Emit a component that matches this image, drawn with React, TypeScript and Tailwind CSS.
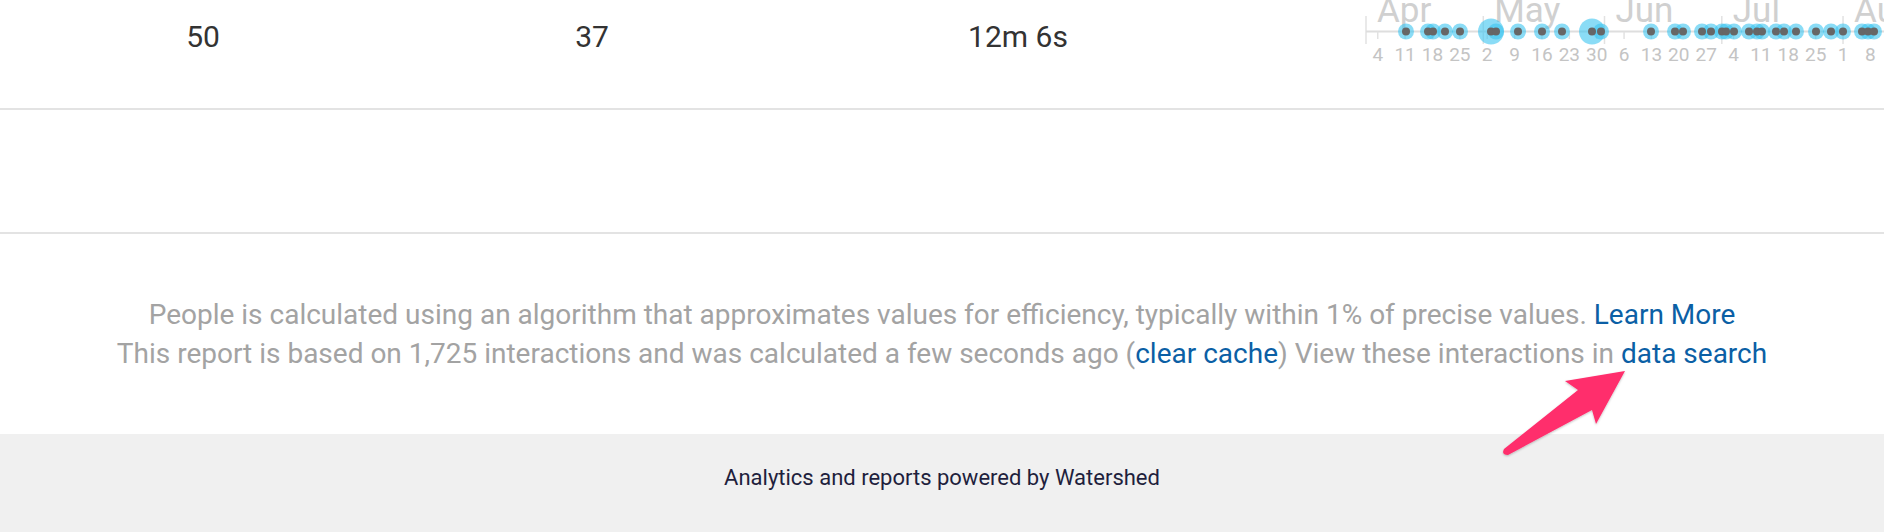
const OX = 1258;
const DAY = 3.91;
const START = 1366;

const dx = (d: number) => START - OX + d * DAY;

const weeks = ["4", "11", "18", "25", "2", "9", "16", "23", "30", "6", "13", "20", "27", "4", "11", "18", "25", "1", "8"];
const months = [
  { label: "Apr", d: 0 },
  { label: "May", d: 30 },
  { label: "Jun", d: 61 },
  { label: "Jul", d: 91 },
  { label: "Aug", d: 122 },
];

// x positions in page coords, r = halo radius
const dots: { x: number; r: number }[] = [
  { x: 1406, r: 8 },
  { x: 1428, r: 8 },
  { x: 1433, r: 8 },
  { x: 1445, r: 8 },
  { x: 1460, r: 8 },
  { x: 1491, r: 13 },
  { x: 1496, r: 8 },
  { x: 1518, r: 8 },
  { x: 1542, r: 8 },
  { x: 1562, r: 8 },
  { x: 1592, r: 13 },
  { x: 1601, r: 8 },
  { x: 1651, r: 8 },
  { x: 1675, r: 8 },
  { x: 1683, r: 8 },
  { x: 1702, r: 8 },
  { x: 1711, r: 8 },
  { x: 1722, r: 8 },
  { x: 1726, r: 8 },
  { x: 1734, r: 8 },
  { x: 1749, r: 8 },
  { x: 1757, r: 8 },
  { x: 1762, r: 8 },
  { x: 1776, r: 8 },
  { x: 1784, r: 8 },
  { x: 1796, r: 8 },
  { x: 1816, r: 8 },
  { x: 1831, r: 8 },
  { x: 1843, r: 8 },
  { x: 1862, r: 8 },
  { x: 1868, r: 8 },
  { x: 1874, r: 8 },
];

function Timeline() {
  const axisY = 31.5;
  return (
    <svg width={626} height={70} className="block" style={{ fontFamily: "Roboto, sans-serif" }}>
      {months.map((m) => (
        <g key={m.label}>
          <line x1={dx(m.d)} x2={dx(m.d)} y1={16} y2={44} stroke="#e2e2e2" strokeWidth={1.5} />
          <text x={dx(m.d) + 11} y={22} fontSize={35} fill="#d0d0d0">
            {m.label}
          </text>
        </g>
      ))}
      <line x1={dx(0)} x2={626} y1={axisY} y2={axisY} stroke="#dedede" strokeWidth={2} />
      {weeks.map((w, i) => {
        const x = dx(3 + i * 7);
        return (
          <g key={i}>
            <line x1={x} x2={x} y1={axisY} y2={39} stroke="#e2e2e2" strokeWidth={1.5} />
            <text x={x} y={61} fontSize={19} fill="#c4c4c4" textAnchor="middle">
              {w}
            </text>
          </g>
        );
      })}
      {dots.map((p, i) => (
        <circle key={"h" + i} cx={p.x - OX} cy={axisY} r={p.r} fill="#3cc4f0" fillOpacity={0.6} />
      ))}
      {dots.map((p, i) => (
        <circle key={"d" + i} cx={p.x - OX} cy={axisY} r={4} fill="#666666" />
      ))}
    </svg>
  );
}

export default function App() {
  return (
    <div className="relative w-[1884px] bg-white font-['Roboto',sans-serif]">
      {/* summary row */}
      <div className="grid h-[110px] grid-cols-[406px_372px_480px_1fr] border-b-2 border-[#e3e3e3]">
        <div className="pt-[18px] text-center text-[30px] leading-[37px] text-[#333]">50</div>
        <div className="pt-[18px] text-center text-[30px] leading-[37px] text-[#333]">37</div>
        <div className="pt-[18px] text-center text-[30px] leading-[37px] text-[#333]">12m 6s</div>
        <div className="overflow-hidden">
          <Timeline />
        </div>
      </div>

      {/* empty row */}
      <div className="h-[124px] border-b-2 border-[#e3e3e3]" />

      {/* notes */}
      <div className="flex h-[200px] flex-col items-center pt-[61px] text-[28px] leading-[39px] text-[#a3a3a3]">
        <p>
          People is calculated using an algorithm that approximates values for efficiency, typically within 1% of precise
          values. <a className="text-[#0b5fa5]">Learn More</a>
        </p>
        <p>
          This report is based on 1,725 interactions and was calculated a few seconds ago (
          <a className="text-[#0b5fa5]">clear cache</a>) View these interactions in{" "}
          <a className="text-[#0b5fa5]">data search</a>
        </p>
      </div>

      {/* footer */}
      <div className="h-[98px] bg-[#f0f0f0] pt-[30px] text-center text-[22px] leading-[28px] text-[#1f1f3d]">
        Analytics and reports powered by Watershed
      </div>

      {/* annotation arrow */}
      <svg className="pointer-events-none absolute left-0 top-0" width={1884} height={532}>
        <defs>
          <filter id="sh" x="-20%" y="-20%" width="140%" height="140%">
            <feDropShadow dx="0" dy="1" stdDeviation="1" floodColor="#000" floodOpacity="0.25" />
          </filter>
        </defs>
        <path
          d="M1625 371 L1565 381 L1578 390 L1504 449 Q1501 455 1508 455 L1592 410 L1596 424 Z"
          fill="#ff2d6c"
          filter="url(#sh)"
        />
      </svg>
    </div>
  );
}
